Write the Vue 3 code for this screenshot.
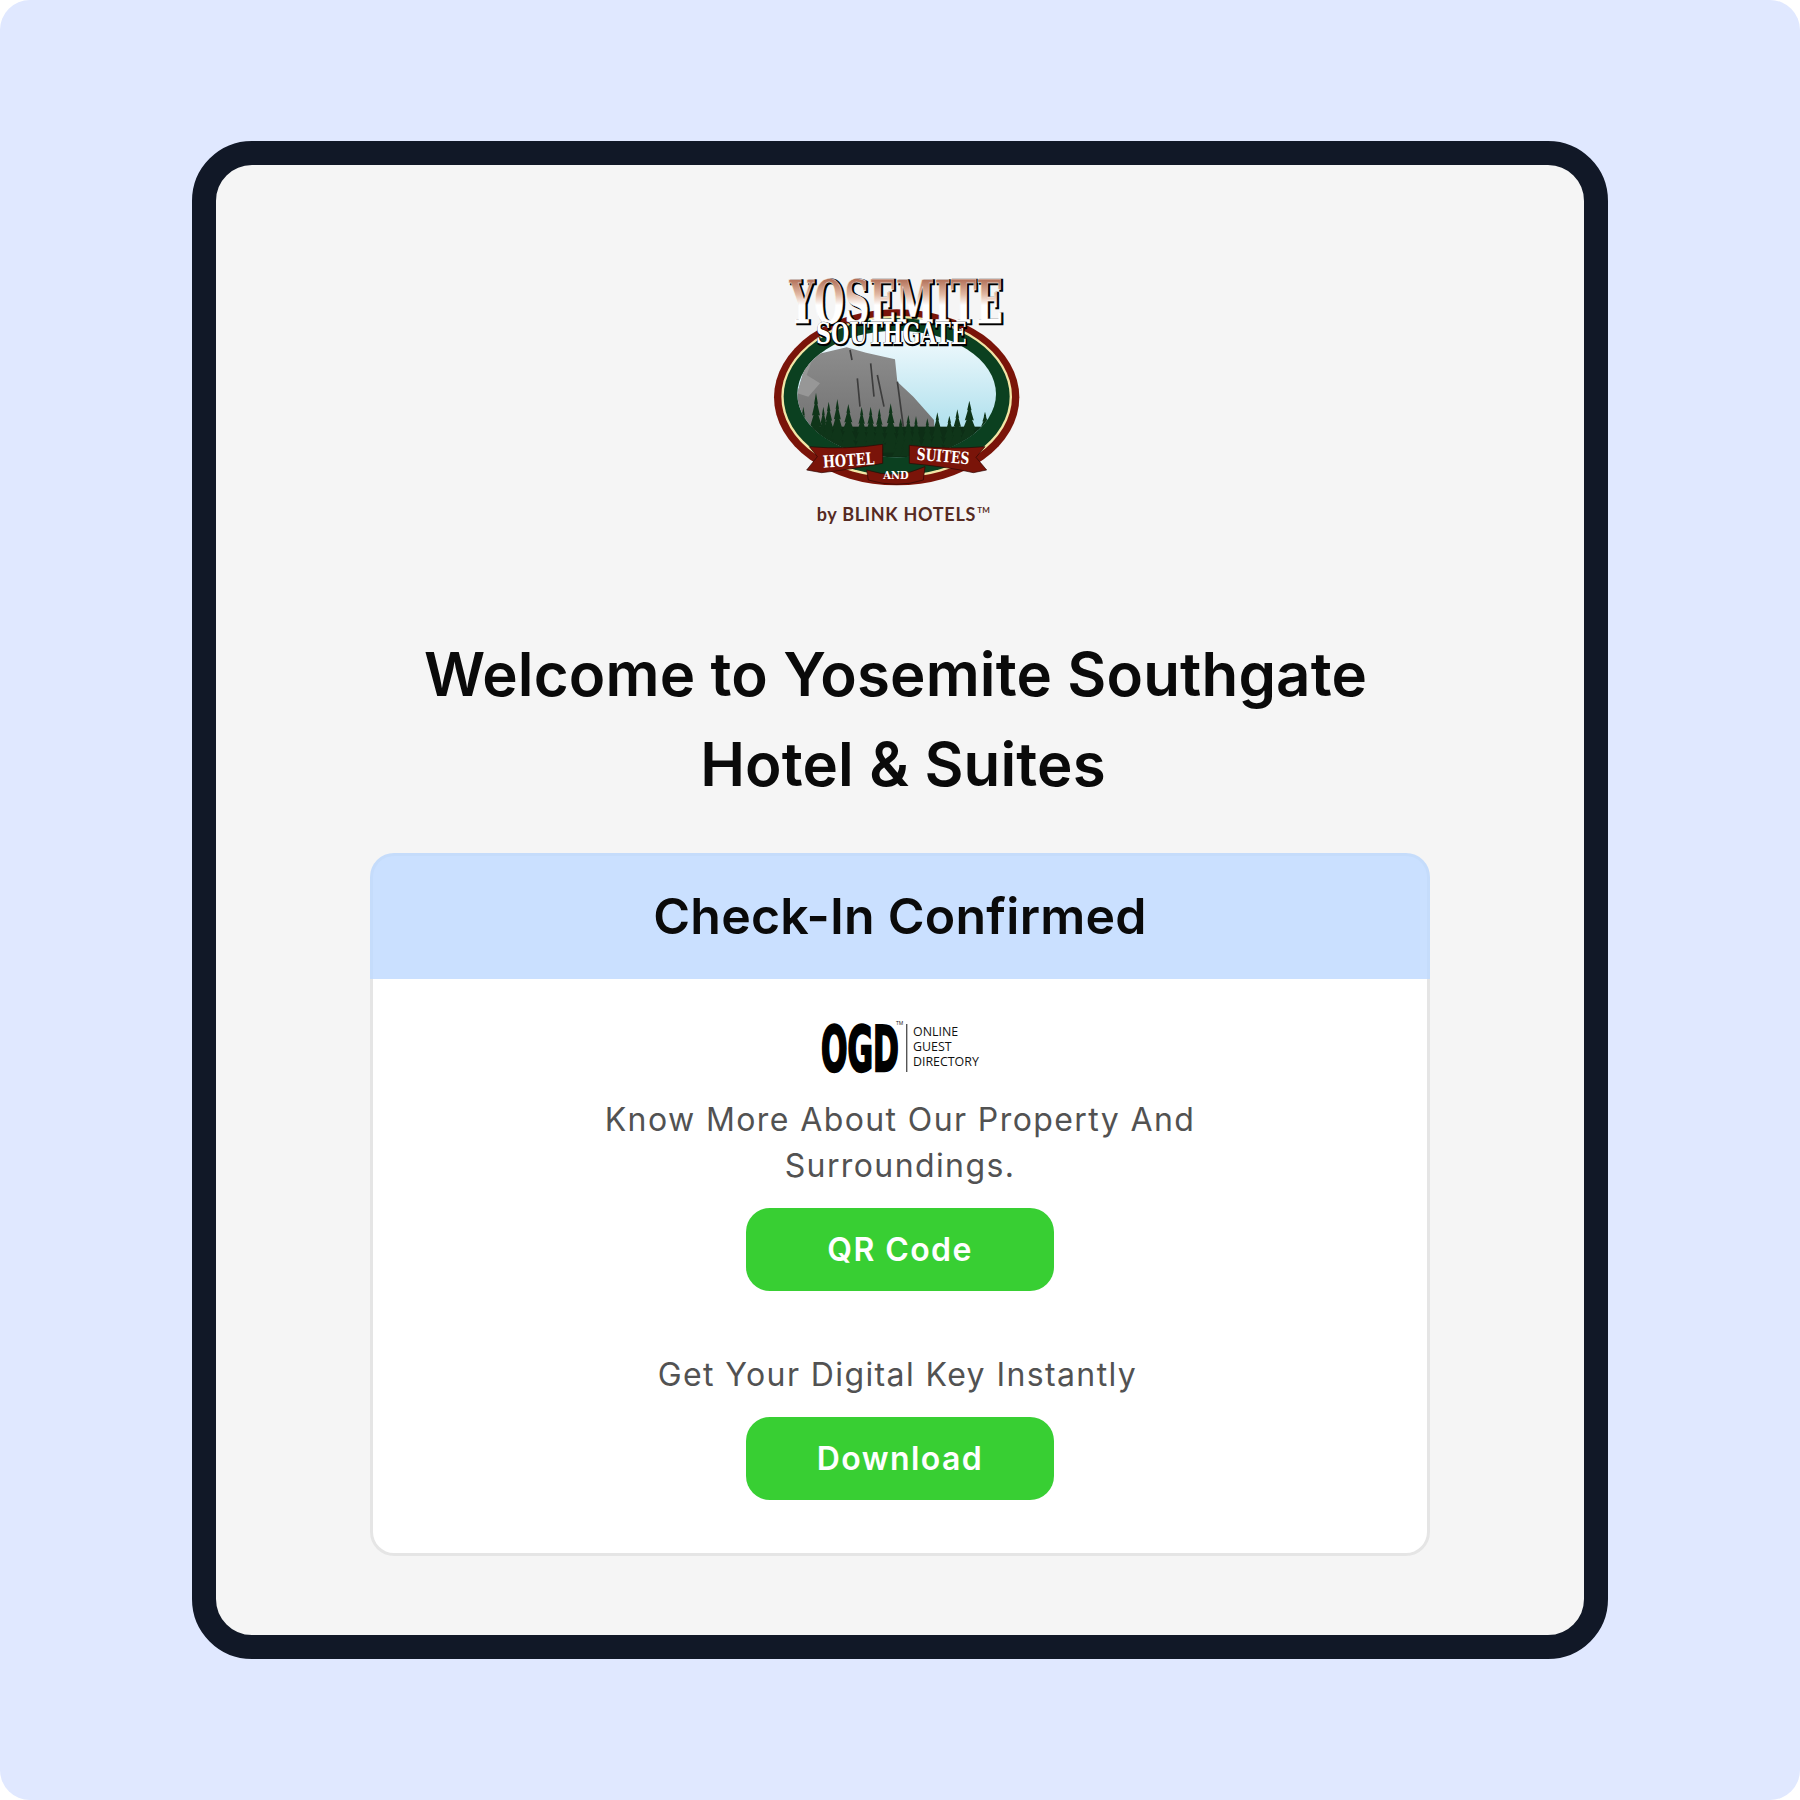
<script setup>
// x, top y, half width, base y of each pine in the hotel logo
const trees = [
  [190, 470, 22, 600], [228, 428, 30, 600], [250, 470, 22, 600], [266, 455, 26, 600], [292, 447, 26, 600],
  [325, 462, 30, 600], [365, 470, 24, 600], [392, 470, 24, 600], [418, 475, 24, 600],
  [452, 460, 28, 610], [482, 505, 26, 620], [505, 495, 26, 620], [528, 498, 24, 620],
  [562, 505, 24, 610], [592, 487, 26, 610], [628, 497, 26, 610], [652, 478, 28, 610],
  [688, 452, 34, 600], [735, 485, 20, 560],
];

function treePath([x, top, w, base]) {
  const h = base - top;
  const steps = 5;
  let right = "";
  let left = "";
  for (let i = 1; i <= steps; i++) {
    const y = top + (h * i) / steps;
    const spread = (w * i) / steps;
    right += ` L${x + spread} ${y} L${x + spread * 0.6} ${y - 2}`;
    left = ` L${x - spread * 0.6} ${y - 2} L${x - spread} ${y}` + left;
  }
  return `M${x} ${top}${right}${left} Z`;
}
</script>

<template>
  <main class="page">
    <section class="frame">
      <div class="hotel-logo">
        <svg viewBox="0 0 960 870" width="320" height="290" role="img" aria-label="Yosemite Southgate Hotel and Suites by Blink Hotels">
          <defs>
            <linearGradient id="sky" x1="0" y1="0" x2="0" y2="1">
              <stop offset="0" stop-color="#f4fbfe" />
              <stop offset="0.7" stop-color="#b4e2ee" />
            </linearGradient>
            <linearGradient id="rock" x1="0" y1="0" x2="0" y2="1">
              <stop offset="0" stop-color="#8d8d8d" />
              <stop offset="1" stop-color="#6a6a6a" />
            </linearGradient>
            <linearGradient id="title" x1="0" y1="0" x2="0" y2="1">
              <stop offset="0" stop-color="#8a341a" />
              <stop offset="0.4" stop-color="#e2b9a4" />
              <stop offset="0.55" stop-color="#ffffff" />
            </linearGradient>
            <clipPath id="scene">
              <ellipse cx="470" cy="432" rx="298" ry="190" />
            </clipPath>
          </defs>

          <ellipse cx="470" cy="442" rx="368" ry="264" fill="#7a1409" />
          <ellipse cx="470" cy="440" rx="346" ry="243" fill="#f3e6a6" />
          <ellipse cx="470" cy="440" rx="339" ry="236" fill="#0b4020" />
          <g clip-path="url(#scene)">
            <rect x="170" y="240" width="600" height="390" fill="url(#sky)" />
            <path d="M172 430 L195 350 L222 315 L320 292 L378 308 L465 328 L472 395 L520 440 L582 510 L590 620 L172 620 Z" fill="url(#rock)" />
            <path d="M172 430 L195 350 L222 315 L200 375 L240 400 L205 440 Z" fill="#979797" />
            <path d="M352 385 L360 470 M392 340 L402 440 M412 375 L432 470 M472 395 L490 530 M330 300 L336 330" stroke="#3d3d3d" stroke-width="5" fill="none" />
            <rect x="170" y="530" width="600" height="100" fill="#0d2e16" />
            <path v-for="t in trees" :key="t[0]" :d="treePath(t)" fill="#0f3519" />
          </g>

          <path d="M380 660 Q470 690 555 650 L550 690 Q470 716 385 690 Z" fill="#7a1409" stroke="#2a0603" stroke-width="2" />
          <path d="M200 660 L232 620 L208 590 Q320 600 428 583 L428 640 Q320 660 245 668 Z" fill="#7a1409" stroke="#2a0603" stroke-width="2" />
          <path d="M740 660 L708 622 L735 590 Q620 600 508 586 L508 640 Q620 650 700 668 Z" fill="#7a1409" stroke="#2a0603" stroke-width="2" />

          <text class="banner-text" x="248" y="648" font-size="50" textLength="155" lengthAdjust="spacingAndGlyphs" transform="rotate(-4 325 625)">HOTEL</text>
          <text class="banner-text" x="530" y="636" font-size="50" textLength="158" lengthAdjust="spacingAndGlyphs" transform="rotate(5 610 620)">SUITES</text>
          <text class="banner-text" x="430" y="688" font-size="32" textLength="76" lengthAdjust="spacingAndGlyphs">AND</text>

          <text class="title-shadow" x="153" y="222" font-size="178" textLength="640" lengthAdjust="spacingAndGlyphs">YOSEMITE</text>
          <text class="title-text" x="148" y="218" font-size="178" textLength="640" lengthAdjust="spacingAndGlyphs">YOSEMITE</text>
          <text class="sub-shadow" x="230" y="284" font-size="88" textLength="452" lengthAdjust="spacingAndGlyphs">SOUTHGATE</text>
          <text class="sub-text" x="228" y="282" font-size="88" textLength="452" lengthAdjust="spacingAndGlyphs">SOUTHGATE</text>

          <text class="blink-text" x="230" y="812" font-size="54" textLength="476" lengthAdjust="spacing">by BLINK HOTELS</text>
          <text class="blink-text" x="712" y="790" font-size="24">TM</text>
        </svg>
      </div>

      <h1 class="welcome">
        <span class="line-one">Welcome to Yosemite Southgate</span>
        <span class="line-two">Hotel &amp; Suites</span>
      </h1>

      <div class="card">
        <header class="card-header">
          <h2>Check-In Confirmed</h2>
        </header>
        <div class="card-body">
          <svg class="ogd-logo" viewBox="0 0 240 90" width="240" height="90" role="img" aria-label="OGD Online Guest Directory">
            <text class="ogd-mark" x="41" y="71" font-size="63" textLength="78" lengthAdjust="spacingAndGlyphs">OGD</text>
            <text class="ogd-tm" x="116" y="25" font-size="5">TM</text>
            <rect x="126" y="24" width="1.4" height="48" fill="#555" />
            <text class="ogd-line" x="133" y="35.5" font-size="12.4">ONLINE</text>
            <text class="ogd-line" x="133" y="50.5" font-size="12.4">GUEST</text>
            <text class="ogd-line" x="133" y="65.5" font-size="12.4">DIRECTORY</text>
          </svg>
          <p class="note">Know More About Our Property And<br />Surroundings.</p>
          <button class="action" type="button">QR Code</button>
          <p class="note second">Get Your Digital Key Instantly</p>
          <button class="action" type="button">Download</button>
        </div>
      </div>
    </section>
  </main>
</template>

<style>
body {
  background: #ffffff;
}
</style>

<style scoped>
.page {
  box-sizing: border-box;
  width: 1800px;
  height: 1800px;
  padding-top: 141px;
  display: flex;
  justify-content: center;
  align-items: flex-start;
  background: #e0e8ff;
  border-radius: 30px;
  font-family: Inter, "Liberation Sans", sans-serif;
}
.frame {
  box-sizing: border-box;
  width: 1416px;
  height: 1518px;
  padding-top: 85px;
  display: flex;
  flex-direction: column;
  align-items: center;
  background: #f5f5f5;
  border: 24px solid #111827;
  border-radius: 60px;
}
.hotel-logo {
  height: 290px;
}
.hotel-logo svg {
  display: block;
  overflow: visible;
}
.title-shadow {
  font-family: "DejaVu Serif", serif;
  font-weight: 700;
  fill: #000;
  stroke: #000;
  stroke-width: 7px;
}
.title-text {
  font-family: "DejaVu Serif", serif;
  font-weight: 700;
  fill: url(#title);
  stroke: #fff;
  stroke-width: 1.5px;
}
.sub-shadow {
  font-family: "DejaVu Serif", serif;
  font-weight: 700;
  fill: #000;
  stroke: #000;
  stroke-width: 7px;
}
.sub-text {
  font-family: "DejaVu Serif", serif;
  font-weight: 700;
  fill: #fff;
}
.banner-text {
  font-family: "DejaVu Serif", serif;
  font-weight: 700;
  fill: #fff;
}
.blink-text {
  font-family: Lato, "Liberation Sans", sans-serif;
  font-weight: 700;
  fill: #562a22;
}
.welcome {
  margin: 89px 0 44px;
  font-size: 60px;
  line-height: 90px;
  font-weight: 600;
  letter-spacing: 0.15px;
  color: #0a0a0a;
  text-align: center;
}
.line-one {
  display: block;
  margin-right: 9px;
}
.line-two {
  display: block;
  margin-left: 6px;
}
.card {
  width: 1060px;
}
.card-header {
  box-sizing: border-box;
  height: 126px;
  padding-bottom: 2px;
  display: flex;
  align-items: center;
  justify-content: center;
  background: #cae0ff;
  border: 3px solid #c5dcfb;
  border-bottom: none;
  border-radius: 24px 24px 0 0;
}
.card-header h2 {
  margin: 0;
  font-size: 50px;
  line-height: 75px;
  font-weight: 600;
  letter-spacing: 0.25px;
  color: #0a0a0a;
}
.card-body {
  box-sizing: border-box;
  height: 577px;
  padding-top: 21px;
  display: flex;
  flex-direction: column;
  align-items: center;
  background: #fff;
  border: 3px solid #e5e5e5;
  border-top: none;
  border-radius: 0 0 24px 24px;
}
.ogd-logo {
  display: block;
  margin-bottom: 7px;
}
.ogd-mark {
  font-family: "DejaVu Sans", sans-serif;
  font-stretch: condensed;
  font-weight: 700;
  fill: #000;
  stroke: #000;
  stroke-width: 2.4px;
}
.ogd-tm,
.ogd-line {
  font-family: "Open Sans", sans-serif;
  fill: #111;
}
.note {
  margin: 0 0 19px;
  font-size: 32px;
  line-height: 46px;
  letter-spacing: 1.4px;
  color: #525252;
  text-align: center;
}
.note.second {
  margin: 61px 5px 19px 0;
}
.action {
  width: 308px;
  height: 83px;
  padding: 0;
  border: none;
  border-radius: 24px;
  background: #38cf33;
  color: #fff;
  font-family: inherit;
  font-size: 32px;
  font-weight: 600;
  letter-spacing: 1.4px;
}
</style>
